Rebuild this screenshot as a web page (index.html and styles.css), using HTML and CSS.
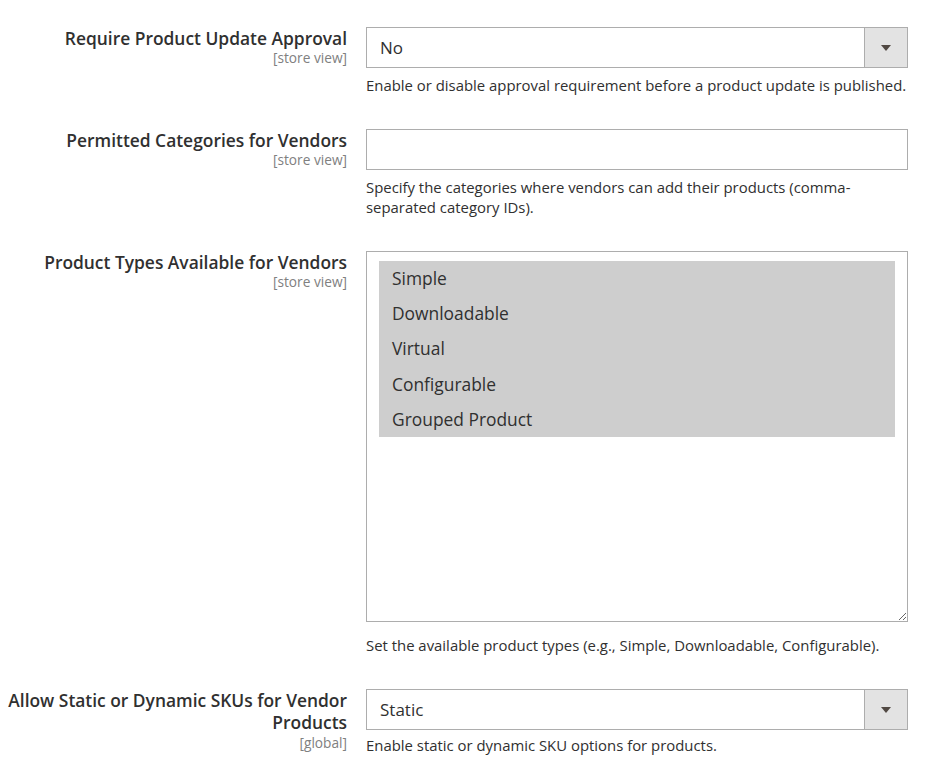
FILE: index.html
```html
<!DOCTYPE html>
<html lang="en">
<head>
    <meta charset="UTF-8">
    <title>Vendor Product Settings</title>
    <link rel="stylesheet" href="styles.css">
</head>
<body>
<form class="config-form">
    <div class="field-row">
        <label class="field-label" for="update-approval">
            Require Product Update Approval
            <span class="field-scope">[store view]</span>
        </label>
        <div class="field-control">
            <div class="select-wrap">
                <select id="update-approval" class="admin-select">
                    <option>No</option>
                    <option>Yes</option>
                </select>
                <span class="select-arrow"></span>
            </div>
            <p class="field-note">Enable or disable approval requirement before a product update is published.</p>
        </div>
    </div>

    <div class="field-row">
        <label class="field-label" for="vendor-categories">
            Permitted Categories for Vendors
            <span class="field-scope">[store view]</span>
        </label>
        <div class="field-control">
            <input id="vendor-categories" class="admin-input" type="text">
            <p class="field-note">Specify the categories where vendors can add their products (comma-separated category IDs).</p>
        </div>
    </div>

    <div class="field-row">
        <label class="field-label">
            Product Types Available for Vendors
            <span class="field-scope">[store view]</span>
        </label>
        <div class="field-control">
            <div class="multiselect" role="listbox" aria-multiselectable="true">
                <div class="multiselect-option is-selected" role="option">Simple</div>
                <div class="multiselect-option is-selected" role="option">Downloadable</div>
                <div class="multiselect-option is-selected" role="option">Virtual</div>
                <div class="multiselect-option is-selected" role="option">Configurable</div>
                <div class="multiselect-option is-selected" role="option">Grouped Product</div>
            </div>
            <p class="field-note field-note-wide">Set the available product types (e.g., Simple, Downloadable, Configurable).</p>
        </div>
    </div>

    <div class="field-row">
        <label class="field-label" for="vendor-sku">
            Allow Static or Dynamic SKUs for Vendor Products
            <span class="field-scope">[global]</span>
        </label>
        <div class="field-control">
            <div class="select-wrap">
                <select id="vendor-sku" class="admin-select">
                    <option>Static</option>
                    <option>Dynamic</option>
                </select>
                <span class="select-arrow"></span>
            </div>
            <p class="field-note field-note-tight">Enable static or dynamic SKU options for products.</p>
        </div>
    </div>
</form>
</body>
</html>
```

FILE: styles.css
```css
body {
    background: #fff;
    color: #303030;
    font-family: "Open Sans", "Noto Sans", sans-serif;
    margin: 0;
    padding-top: 27px;
}

.config-form {
    margin: 0;
}

.field-row {
    column-gap: 19px;
    display: grid;
    grid-template-columns: 347px 542px;
    padding-bottom: 34px;
}

.field-label {
    font-size: 17.4px;
    font-weight: 600;
    line-height: 22.4px;
    text-align: right;
}

.field-scope {
    color: #808080;
    display: block;
    font-size: 13.7px;
    font-weight: 400;
    line-height: 18px;
}

.field-control {
    min-width: 0;
}

.select-wrap {
    position: relative;
}

.admin-select,
.admin-input {
    -webkit-appearance: none;
    appearance: none;
    background: #fff;
    border: 1px solid #adadad;
    border-radius: 0;
    box-sizing: border-box;
    color: #303030;
    display: block;
    font-family: inherit;
    font-size: 17px;
    height: 41px;
    margin: 0;
    outline: none;
    padding: 0 13px;
    width: 100%;
}

.select-arrow {
    background: #e3e3e3;
    border-left: 1px solid #adadad;
    bottom: 1px;
    pointer-events: none;
    position: absolute;
    right: 1px;
    top: 1px;
    width: 42px;
}

.select-arrow::after {
    border-left: 5px solid transparent;
    border-right: 5px solid transparent;
    border-top: 6px solid #514943;
    content: "";
    left: 16px;
    position: absolute;
    top: 17px;
}

.multiselect {
    border: 1px solid #adadad;
    box-sizing: border-box;
    height: 371px;
    overflow: auto;
    padding: 9px 12px;
    resize: vertical;
}

.multiselect-option {
    font-size: 17.4px;
    height: 35.2px;
    line-height: 35.2px;
    padding: 0 13px;
}

.multiselect-option.is-selected {
    background: #cecece;
}

.field-note {
    font-size: 14.9px;
    line-height: 20px;
    margin: 7px 0 0;
}

.field-note-wide {
    margin-top: 13px;
}

.field-note-tight {
    margin-top: 5px;
}
```
